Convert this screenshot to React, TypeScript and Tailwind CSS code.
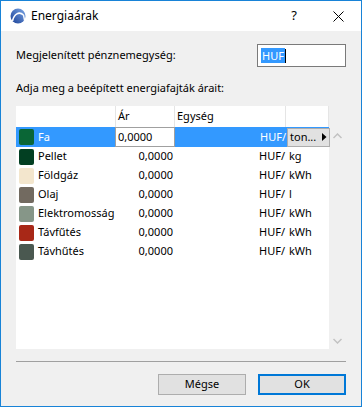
import React from "react";

const rows = [
  { name: "Fa", color: "#0a6636", unit: "" },
  { name: "Pellet", color: "#023f22", unit: "kg" },
  { name: "Földgáz", color: "#f3e6cd", unit: "kWh" },
  { name: "Olaj", color: "#726a60", unit: "l" },
  { name: "Elektromosság", color: "#869688", unit: "kWh" },
  { name: "Távfűtés", color: "#a82817", unit: "kWh" },
  { name: "Távhűtés", color: "#4a5850", unit: "kWh" },
];

export default function App() {
  return (
    <div
      className="w-[362px] h-[407px] border border-[#1883d7] flex flex-col bg-[#f0f0f0] text-[11px] text-black overflow-hidden"
      style={{ fontFamily: '"Segoe UI", "Noto Sans", sans-serif' }}
    >
      {/* title bar */}
      <div className="h-[30px] bg-white flex items-center shrink-0">
        <div className="ml-[9px] w-[16px] h-[16px] shrink-0">
          <svg width="16" height="16" viewBox="0 0 16 16">
            <defs>
              <linearGradient id="lg" x1="0" y1="1" x2="1" y2="0">
                <stop offset="0" stopColor="#1a3f95" />
                <stop offset="1" stopColor="#7aa6e6" />
              </linearGradient>
            </defs>
            <circle cx="8" cy="8" r="7.5" fill="url(#lg)" />
            <path d="M2.5 13 C4 6 9 3 13.5 7" stroke="#fff" strokeWidth="1.6" fill="none" />
            <path d="M13.5 7 L14.5 12" stroke="#fff" strokeWidth="1.4" fill="none" />
          </svg>
        </div>
        <div className="ml-[5px] text-[12px]">Energiaárak</div>
        <div className="ml-auto mr-[36px] text-[13px]">?</div>
        <div className="mr-[17px]">
          <svg width="11" height="11" viewBox="0 0 11 11">
            <path d="M0.5 0.5 L10.5 10.5 M10.5 0.5 L0.5 10.5" stroke="#000" strokeWidth="1" />
          </svg>
        </div>
      </div>

      {/* content */}
      <div className="flex-1 flex flex-col px-[15px] pt-[13px]">
        <div className="flex items-center h-[23px]">
          <span>Megjelenített pénznemegység:</span>
          <div className="ml-auto w-[89px] h-[23px] bg-white border border-[#7a7a7a] flex items-center pl-[3px]">
            <span className="bg-[#3399ff] text-white leading-[15px] px-px">HUF</span>
            <span className="w-px h-[14px] bg-black"></span>
          </div>
        </div>
        <div className="mt-[13px] h-[16px] leading-[16px]">Adja meg a beépített energiafajták árait:</div>

        {/* table */}
        <div className="mt-[10px] h-[243px] flex">
          <div className="w-[313px] bg-white flex flex-col">
            <div className="h-[21px] flex items-center">
              <div className="w-[99px] h-full"></div>
              <div className="w-[59px] h-full border-l border-[#e5e5e5] pl-[2px] flex items-center">Ár</div>
              <div className="w-[111px] h-full border-l border-[#e5e5e5] pl-[2px] flex items-center">Egység</div>
              <div className="w-[44px] h-full border-l border-r border-[#e5e5e5]"></div>
            </div>
            {rows.map((r, i) => {
              const sel = i === 0;
              return (
                <div
                  key={r.name}
                  className={`${sel ? "h-[20px] bg-[#3399ff] text-white" : "h-[19px]"} flex items-center`}
                >
                  <div className="w-[99px] shrink-0 flex items-center pl-[3px]">
                    <div
                      className="w-[15px] h-[16px] rounded-[2px] shrink-0"
                      style={{ backgroundColor: r.color }}
                    ></div>
                    <span className="ml-[4px] whitespace-nowrap">{r.name}</span>
                  </div>
                  {sel ? (
                    <div className="w-[60px] shrink-0 h-[20px] bg-white text-black border border-[#a0a0a0] pl-[2px] flex items-center">
                      0,0000
                    </div>
                  ) : (
                    <div className="w-[59px] shrink-0 text-right pr-px">0,0000</div>
                  )}
                  <div className="w-[111px] shrink-0 text-right">HUF/</div>
                  {sel ? (
                    <div className="ml-px w-[43px] shrink-0 h-[19px] bg-[#e1e1e1] border border-[#adadad] text-black flex items-center pl-[2px]">
                      <span>ton...</span>
                      <svg className="ml-auto mr-[2px]" width="5" height="8" viewBox="0 0 5 8">
                        <path d="M0 0 L4.5 4 L0 8 Z" fill="#000" />
                      </svg>
                    </div>
                  ) : (
                    <div className="pl-[4px]">{r.unit}</div>
                  )}
                </div>
              );
            })}
          </div>
          {/* scrollbar */}
          <div className="w-[17px] flex flex-col items-center pt-[27px] pb-[5px]">
            <svg width="9" height="6" viewBox="0 0 9 6">
              <path d="M0.5 5 L4.5 1 L8.5 5" stroke="#c2c2c2" strokeWidth="1.5" fill="none" />
            </svg>
            <div className="flex-1"></div>
            <svg width="9" height="6" viewBox="0 0 9 6">
              <path d="M0.5 1 L4.5 5 L8.5 1" stroke="#c2c2c2" strokeWidth="1.5" fill="none" />
            </svg>
          </div>
        </div>

        <div className="mt-[12px] h-px bg-[#a0a0a0]"></div>

        <div className="mt-[12px] flex justify-end gap-[12px]">
          <div className="w-[88px] h-[21px] bg-[#e1e1e1] border border-[#adadad] flex items-center justify-center">
            Mégse
          </div>
          <div className="w-[88px] h-[21px] bg-[#e1e1e1] border-2 border-[#0078d7] flex items-center justify-center">
            OK
          </div>
        </div>
      </div>
    </div>
  );
}
